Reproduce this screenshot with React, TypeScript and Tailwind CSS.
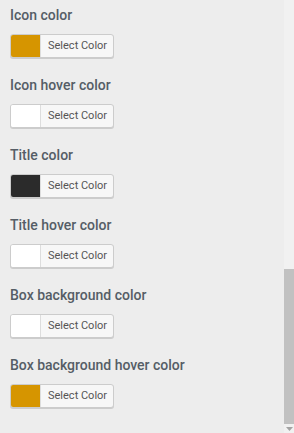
const settings = [
  { label: 'Icon color', color: '#d69500' },
  { label: 'Icon hover color', color: '#ffffff' },
  { label: 'Title color', color: '#2b2b2b' },
  { label: 'Title hover color', color: '#ffffff' },
  { label: 'Box background color', color: '#ffffff' },
  { label: 'Box background hover color', color: '#d69500' },
]

function ColorButton({ color }: { color: string }) {
  return (
    <button className="flex h-6 w-[104px] items-stretch overflow-hidden rounded-[3px] border border-[#cccccc] bg-[#f7f7f7] shadow-[0_1px_0_#cccccc]">
      <span className="w-[30px] border-r border-[#dddddd]" style={{ backgroundColor: color }} />
      <span className="flex flex-1 items-center pl-[7px] text-[11px] text-[#555555]">Select Color</span>
    </button>
  )
}

export default function App() {
  return (
    <div className="flex h-[433px] w-[294px] bg-[#ededed] font-['Roboto',sans-serif]">
      <div className="flex-1 pt-[5px] pl-[10px]">
        {settings.map(({ label, color }) => (
          <div key={label} className="h-[70px]">
            <div className="h-5 text-[14px] leading-5 font-medium text-[#555d66]">{label}</div>
            <div className="mt-[9px]">
              <ColorButton color={color} />
            </div>
          </div>
        ))}
      </div>
      {/* scrollbar */}
      <div className="flex w-[10px] flex-col bg-[#f1f1f1]">
        <div className="h-[269px]" />
        <div className="h-[155px] bg-[#c1c1c1]" />
        <div className="flex flex-1 items-center justify-center">
          <svg width="7" height="4" viewBox="0 0 7 4">
            <path d="M0 0h7L3.5 4z" fill="#a3a3a3" />
          </svg>
        </div>
      </div>
    </div>
  )
}
